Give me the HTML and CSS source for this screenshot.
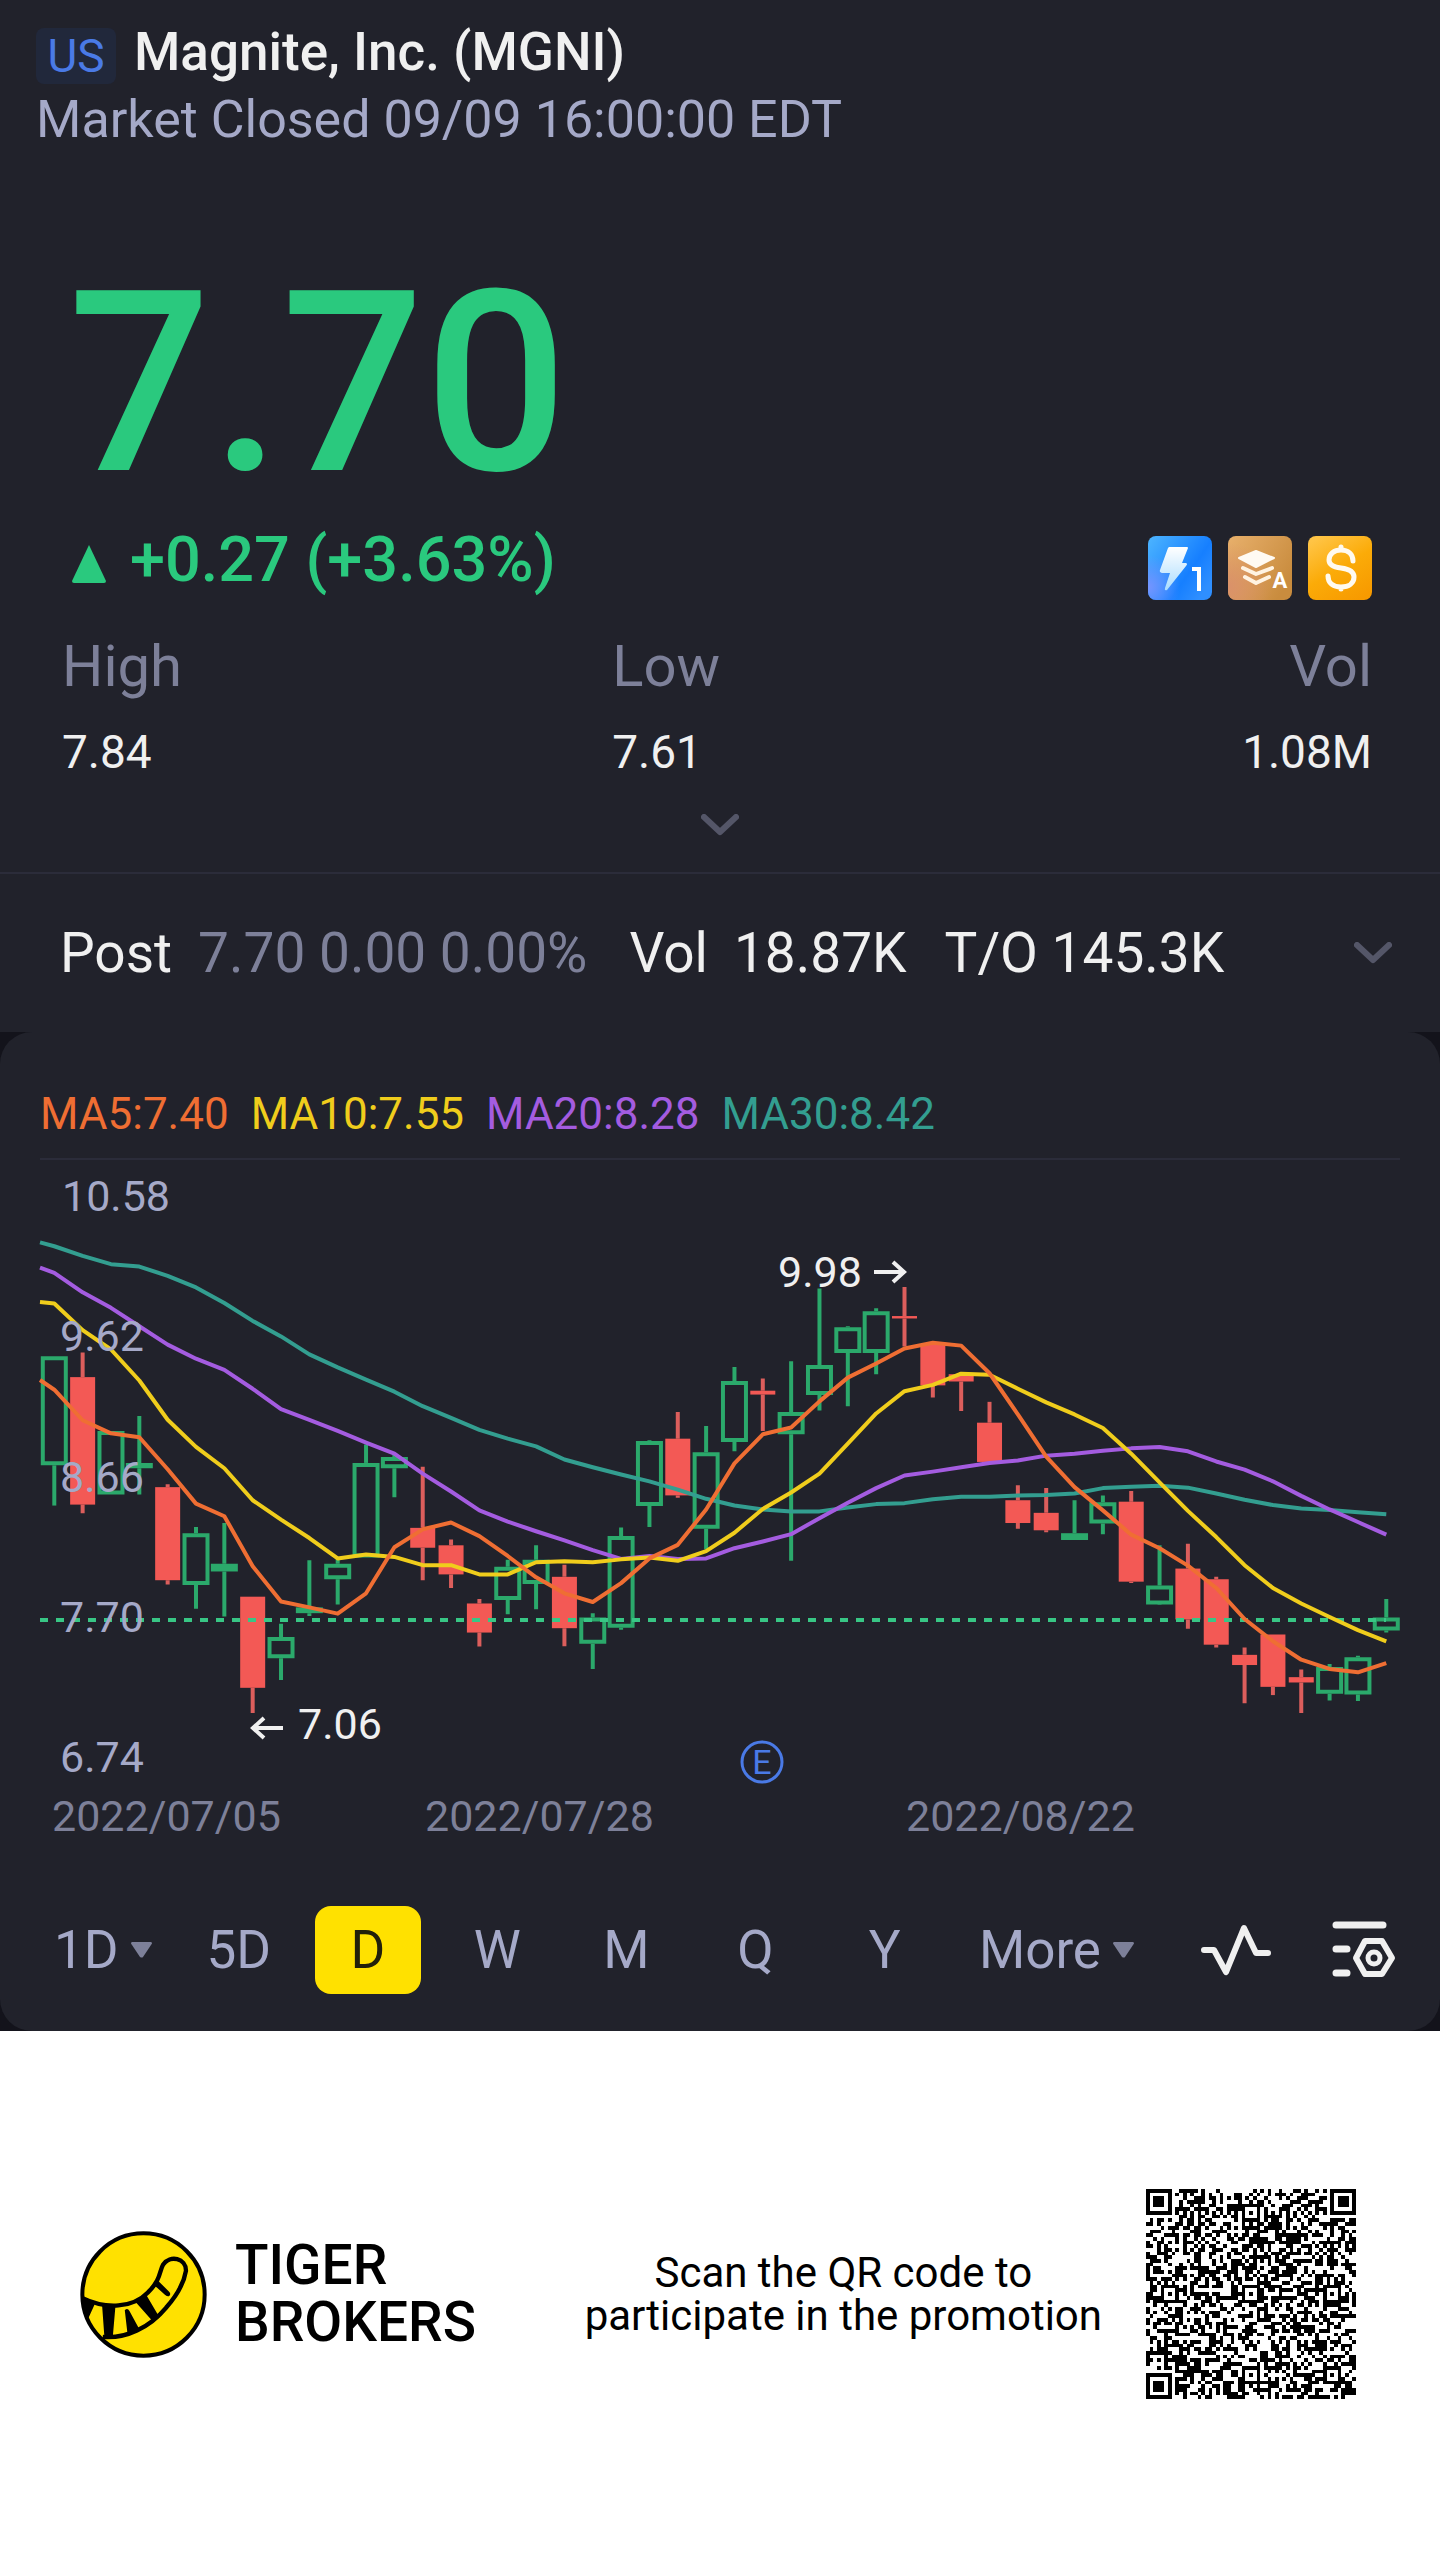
FILE: index.html
```html
<!DOCTYPE html>
<html lang="en">
<head>
<meta charset="utf-8">
<meta name="viewport" content="width=device-width, initial-scale=1">
<title>Magnite, Inc. (MGNI)</title>
<link rel="stylesheet" href="styles.css">
</head>
<body>
<main class="app">
  <section class="quote">
    <header class="head">
      <div class="head-row">
        <span class="market">US</span>
        <h1 class="name">Magnite, Inc. (MGNI)</h1>
      </div>
      <p class="status">Market Closed 09/09 16:00:00 EDT</p>
    </header>
    <p class="price">7.70</p>
    <div class="change-row">
      <p class="change">
        <svg class="up" viewBox="0 0 34 38" aria-hidden="true"><path d="M17 0 34 36q0 2-2 2H2q-2 0-2-2z"/></svg>
        <span>+0.27 (+3.63%)</span>
      </p>
      <div class="badges">
        <svg class="badge" viewBox="0 0 64 64" role="img" aria-label="Level 1 quotes">
          <defs>
            <linearGradient id="blue" x1="0" y1="0" x2="1" y2="0.7"><stop offset="0" stop-color="#4db5ff"/><stop offset="0.7" stop-color="#167fff"/><stop offset="1" stop-color="#2f8fff"/></linearGradient>
            <radialGradient id="violet" cx="0" cy="0.8" r="0.5"><stop offset="0" stop-color="#7594ff"/><stop offset="1" stop-color="#7594ff" stop-opacity="0"/></radialGradient>
            <linearGradient id="bolt" x1="0" y1="0" x2="0" y2="1"><stop offset="0" stop-color="#fff"/><stop offset="1" stop-color="#a9dcff"/></linearGradient>
          </defs>
          <rect width="64" height="64" rx="8" fill="url(#blue)"/>
          <rect width="64" height="64" rx="8" fill="url(#violet)"/>
          <path d="M21 11h18q1 0 1 1l-6 15h4q2 1 0 3L19 54q-3 1-2-2l5-15h-8q-3-1-2-3l8-22z" fill="url(#bolt)"/>
          <path d="M44 33h7v22" fill="none" stroke="#fff" stroke-width="4"/>
        </svg>
        <svg class="badge" viewBox="0 0 64 64" role="img" aria-label="Depth A">
          <defs>
            <linearGradient id="bronze" x1="0" y1="0" x2="1" y2="0.6"><stop offset="0" stop-color="#e8b06c"/><stop offset="1" stop-color="#c98c3e"/></linearGradient>
            <radialGradient id="rose" cx="0" cy="0.8" r="0.7"><stop offset="0" stop-color="#da916a"/><stop offset="1" stop-color="#da916a" stop-opacity="0"/></radialGradient>
          </defs>
          <rect width="64" height="64" rx="8" fill="url(#bronze)"/>
          <rect width="64" height="64" rx="8" fill="url(#rose)"/>
          <path d="M11 22 28 15 46 22 28 31z" fill="#fffaf2" stroke="#fffaf2" stroke-width="2" stroke-linejoin="round"/>
          <path d="M15 32l13 6 16-6M17 41l11 6 13-6" fill="none" stroke="#fff3e2" stroke-width="4" stroke-linecap="round" stroke-linejoin="round"/>
          <text x="52" y="52" class="badge-letter">A</text>
        </svg>
        <svg class="badge" viewBox="0 0 64 64" role="img" aria-label="Dividend">
          <defs>
            <linearGradient id="gold" x1="0.2" y1="0" x2="0.8" y2="1"><stop offset="0" stop-color="#ffc445"/><stop offset="0.5" stop-color="#fbab08"/><stop offset="1" stop-color="#f79a00"/></linearGradient>
          </defs>
          <rect width="64" height="64" rx="8" fill="url(#gold)"/>
          <path d="M45 25c0-7-5-11-12-11s-12 4-12 10c0 5 4 7 12 8s13 3 13 9-5 10-13 10-13-4-13-11M33 11v3M33 51v2" fill="none" stroke="#fffaf0" stroke-width="5" stroke-linecap="round"/>
        </svg>
      </div>
    </div>
    <dl class="stats">
      <div><dt>High</dt><dd>7.84</dd></div>
      <div><dt>Low</dt><dd>7.61</dd></div>
      <div class="right"><dt>Vol</dt><dd>1.08M</dd></div>
    </dl>
    <button class="expand" type="button" aria-label="Show more figures">
      <svg class="chevron" viewBox="0 0 38 22" aria-hidden="true"><path d="M3 3l16 15L35 3"/></svg>
    </button>
  </section>

  <section class="post">
    <span>Post</span>
    <span class="muted">7.70 0.00 0.00%</span>
    <span class="post-vol">Vol</span>
    <span>18.87K</span>
    <span class="post-to">T/O 145.3K</span>
    <button class="post-more" type="button" aria-label="Show post-market details">
      <svg class="chevron" viewBox="0 0 38 22" aria-hidden="true"><path d="M3 3l16 15L35 3"/></svg>
    </button>
  </section>

  <div class="panel-back">
  <section class="panel">
    <ul class="averages">
      <li class="ma5">MA5:7.40</li>
      <li class="ma10">MA10:7.55</li>
      <li class="ma20">MA20:8.28</li>
      <li class="ma30">MA30:8.42</li>
    </ul>
    <svg class="chart" viewBox="0 0 1440 700" role="img" aria-label="Daily candlestick chart">
      <g id="candles"></g>
      <path class="last" d="M40 460H1386"/>
      <g id="lines"></g>
      <g class="axis">
        <text x="62" y="51">10.58</text>
        <text x="60" y="191">9.62</text>
        <text x="60" y="332">8.66</text>
        <text x="60" y="472">7.70</text>
        <text x="60" y="612">6.74</text>
      </g>
      <g class="dates">
        <text x="52" y="671">2022/07/05</text>
        <text x="425" y="671">2022/07/28</text>
        <text x="906" y="671">2022/08/22</text>
      </g>
      <g class="marks">
        <text x="298" y="579">7.06</text>
        <path d="M283 568H253M264 558l-11 10 11 10"/>
        <text x="778" y="127">9.98</text>
        <path d="M874 112h30M893 102l11 10-11 10"/>
      </g>
      <g class="event">
        <circle cx="762" cy="602" r="20"/>
        <text x="762" y="614">E</text>
      </g>
    </svg>
    <nav class="periods" aria-label="Chart period">
      <button type="button" class="first">1D<svg class="tri" viewBox="0 0 21 16" aria-hidden="true"><path d="M1 0h19q2 1 0 3l-8 12q-1 1-3 0L1 3q-2-2 0-3z"/></svg></button>
      <button type="button">5D</button>
      <button type="button" class="active" aria-pressed="true">D</button>
      <button type="button">W</button>
      <button type="button">M</button>
      <button type="button">Q</button>
      <button type="button">Y</button>
      <button type="button">More<svg class="tri" viewBox="0 0 21 16" aria-hidden="true"><path d="M1 0h19q2 1 0 3l-8 12q-1 1-3 0L1 3q-2-2 0-3z"/></svg></button>
      <button type="button" aria-label="Indicators">
        <svg class="tool" viewBox="0 0 72 60" aria-hidden="true"><path d="M4 30h10l12 22L44 8l12 25h12" stroke-width="6"/></svg>
      </button>
      <button type="button" aria-label="Chart settings">
        <svg class="tool" viewBox="0 0 72 60" aria-hidden="true"><g stroke-width="7"><path d="M8 5h47M8 29h11M8 53h11"/><path d="M37 21h17l10 17-10 16H37L28 38z" stroke-width="6"/><circle cx="46" cy="38" r="6" stroke-width="5"/></g></svg>
      </button>
    </nav>
  </section>
  </div>

  <footer class="promo">
    <div class="brand">
      <svg class="logo" viewBox="92 93 380 380" aria-hidden="true">
        <defs><clipPath id="disc"><circle cx="282" cy="283" r="186"/></clipPath></defs>
        <circle cx="282" cy="283" r="183" fill="#ffe100"/>
        <g clip-path="url(#disc)">
          <path d="M98 293C170 328 250 324 296 276 335 238 329 213 341 193 361 164 410 174 409 212 403 248 381 287 350 322 300 382 230 416 160 410" fill="none" stroke="#000" stroke-width="13"/>
          <path d="M92 288 136 312 118 352 112 372 92 350zM158 314 198 318 190 412 165 410zM259 306 290 284 330 352 312 366zM226 330q8-8 14 2l28 52-34 16zM310 254 324 240 358 274q8 8 0 14-4 2-12-4l-24-22z"/>
        </g>
        <circle cx="282" cy="283" r="183" fill="none" stroke="#000" stroke-width="12"/>
      </svg>
      <p class="brand-name">TIGER<br>BROKERS</p>
    </div>
    <p class="scan">Scan the QR code to<br>participate in the promotion</p>
    <svg class="qr" viewBox="0 0 57 57" shape-rendering="crispEdges" role="img" aria-label="QR code"><path id="qr"/></svg>
  </footer>
</main>
<script src="chart.js"></script>
</body>
</html>
```
FILE: styles.css
```css
* { box-sizing: border-box; }
body {
  margin: 0;
  background: #fff;
  color: #f0f0f0;
  font-family: Roboto, "Noto Sans", sans-serif;
  font-weight: 400;
}
h1, p, dl, dt, dd, ul { margin: 0; padding: 0; font-weight: inherit; }
ul { list-style: none; }
button {
  border: 0;
  padding: 0;
  background: none;
  color: inherit;
  font: inherit;
}
svg { display: block; }

.quote {
  background: #21222b;
  border-bottom: 2px solid #2b2c3a;
}
.head { padding: 20px 36px 0; }
.head-row { display: flex; align-items: center; gap: 18px; }
.market {
  width: 80px;
  margin-top: 8px;
  border-radius: 8px;
  background: #21283b;
  color: #4a7ae6;
  font-size: 46px;
  line-height: 56px;
  text-align: center;
}
.name { font-size: 53px; font-weight: 500; line-height: 60px; }
.status { color: #a5a9c8; font-size: 52px; line-height: 64px; margin-top: 4px; }
.price {
  padding: 0 68px;
  margin-top: 104px;
  color: #2ac97e;
  font-size: 252px;
  font-weight: 500;
  line-height: 256px;
}
.change-row {
  display: flex;
  justify-content: space-between;
  align-items: center;
  padding: 0 68px 0 72px;
  margin-top: 8px;
}
.change {
  display: flex;
  align-items: center;
  gap: 24px;
  color: #2ac97e;
  font-size: 63px;
  font-weight: 500;
  line-height: 74px;
}
.up { width: 34px; height: 38px; margin-top: 8px; fill: #2ac97e; }
.badges { display: flex; gap: 16px; margin-top: 16px; }
.badge { width: 64px; height: 64px; }
.badge-letter { font-size: 22px; font-weight: 700; fill: #fff; text-anchor: middle; }
.stats {
  display: grid;
  grid-template-columns: 42fr 29fr 29fr;
  padding: 0 68px 0 62px;
  margin-top: 22px;
}
.stats dt { color: #7d8099; font-size: 58px; line-height: 88px; }
.stats dd { font-size: 46px; line-height: 84px; }
.right { text-align: right; }
.expand { display: block; width: 100%; padding: 20px 0 36px; }
.chevron {
  width: 38px;
  height: 22px;
  margin: 0 auto;
  fill: none;
  stroke: #545668;
  stroke-width: 6;
  stroke-linecap: round;
  stroke-linejoin: round;
}

.post {
  display: flex;
  align-items: center;
  gap: 26px;
  height: 158px;
  padding: 0 48px 0 60px;
  background: #21222b;
  font-size: 55px;
  white-space: nowrap;
}
.muted { color: #7d8099; }
.post-vol { margin-left: 16px; }
.post-to { margin-left: 12px; }
.post-more { margin-left: auto; }

.panel-back { background: #13131b; }
.panel { border-radius: 32px; background: #21222b; }
.averages {
  display: flex;
  gap: 22px;
  margin: 0 40px;
  padding-top: 48px;
  border-bottom: 2px solid #2b2c3a;
  font-size: 44px;
  line-height: 68px;
  height: 128px;
}
.ma5 { color: #ef6e33; }
.ma10 { color: #f0cd1c; }
.ma20 { color: #a45ce0; }
.ma30 { color: #339e90; }

.chart { width: 100%; height: auto; font-size: 43px; }
.candle-up path { fill: none; stroke: #2ba96b; stroke-width: 4; }
.candle-down { fill: #f35955; }
.candle-down path { stroke: #dc5e5c; stroke-width: 4; }
.line { fill: none; stroke-width: 4; stroke-linejoin: round; }
.line.ma5 { stroke: #ef6e33; }
.line.ma10 { stroke: #f0cd1c; }
.line.ma20 { stroke: #a45ce0; }
.line.ma30 { stroke: #339e90; }
.last { stroke: #38c685; stroke-width: 4; stroke-dasharray: 8 8; }
.axis { fill: #a5a9c8; }
.dates { fill: #7d8099; }
.marks { fill: #f0f0f0; }
.marks path { fill: none; stroke: #f0f0f0; stroke-width: 4; }
.event { fill: #4a7ae6; font-size: 34px; text-anchor: middle; }
.event circle { fill: none; stroke: #4a7ae6; stroke-width: 3; }

.periods {
  display: grid;
  grid-template-columns: 120fr repeat(6, 129fr) 214fr 144fr 112fr;
  align-items: center;
  padding: 46px 20px 37px 54px;
  color: #a5a9c8;
  font-size: 53px;
}
.periods button {
  display: flex;
  align-items: center;
  justify-content: center;
  gap: 12px;
  height: 88px;
}
.periods .first { justify-content: flex-start; }
.periods .active {
  margin: 0 12px;
  border-radius: 16px;
  background: #ffe100;
  color: #22200a;
}
.tri { width: 21px; height: 16px; fill: #7d8099; }
.tool { width: 72px; height: 60px; fill: none; stroke: #f0f0f0; stroke-linecap: round; stroke-linejoin: round; }

.promo {
  display: flex;
  align-items: center;
  padding: 158px 84px 158px 80px;
  color: #000;
}
.brand { display: flex; align-items: center; gap: 28px; }
.logo { width: 127px; height: 127px; }
.brand-name { font-size: 55px; font-weight: 500; line-height: 57px; }
.scan { margin: 0 44px 0 auto; font-size: 42px; line-height: 43px; text-align: center; }
.qr { width: 210px; height: 210px; }
```
FILE: chart.js
```js
const NS = "http://www.w3.org/2000/svg";
const STEP = 28.34, FIRST = 54.3, TICK = 0.4847, OFFSET = -80;
const px = i => FIRST + STEP * i;
const py = v => v * TICK + OFFSET;

// One row per trading day: direction, body top, body bottom, high, low.
const days = `u570,795,570,878 d613,876,562,894 u724,855,724,855 u790,801,693,855 d840,1032,834,1041
u935,1042,922,1091 u998,1014,914,1107 d1066,1254,1066,1306 u1149,1193,1122,1238 u1088,1100,991,1106
u998,1030,985,1082 u790,985,752,985 u778,801,770,861 d924,965,798,1032 d960,1020,948,1048
d1080,1140,1071,1169 u1004,1073,990,1102 u990,1040,960,1092 d1025,1131,1000,1168 u1109,1163,1100,1215
u941,1130,923,1134 u745,879,743,922 d740,857,685,862 u768,926,714,968 u621,747,592,766
d641,649,616,724 u685,731,580,992 u588,650,430,682 u510,563,508,673 u477,563,471,607
d487,492,427,550 d545,630,540,655 d607,622,603,683 d707,788,664,788 d867,914,836,926
d893,929,842,933 u935,949,867,949 u871,915,857,937 d870,1035,848,1038 u1043,1082,960,1083
d1008,1113,957,1132 d1030,1165,1025,1171 d1186,1207,1171,1286 d1144,1252,1144,1269 d1232,1243,1216,1306
u1211,1266,1205,1280 u1191,1268,1188,1281 u1109,1136,1071,1140`.split(/\s+/);

// The first value of each average is where it enters the plot on the left.
const averages = {
  ma30: [335,343,363,380,385,404,428,460,497,529,566,593,618,643,673,697,722,740,756,783,799,814,828,845,864,878,886,890,890,882,875,873,865,860,860,857,856,853,842,839,837,841,853,866,877,884,887,892,896],
  ma20: [387,398,438,470,508,546,575,598,637,679,701,724,748,771,812,849,888,911,931,950,970,988,982,988,987,966,952,937,904,872,842,816,808,799,790,785,775,771,765,760,757,766,787,804,828,858,886,912,938],
  ma10: [458,461,516,556,620,701,757,801,867,907,945,987,979,984,1001,1001,1020,1020,995,993,995,989,985,992,972,934,885,851,812,750,688,642,629,606,608,637,665,690,718,771,830,889,943,1001,1048,1080,1108,1135,1158],
  ma5: [619,639,702,729,737,803,874,900,1003,1076,1088,1101,1059,964,927,913,941,982,1026,1059,1077,1038,987,959,886,791,731,717,663,614,585,554,542,548,605,690,777,840,888,938,966,1002,1048,1112,1158,1196,1215,1222,1203]
};

function add(parent, name, attrs) {
  const el = document.createElementNS(NS, name);
  for (const key in attrs) el.setAttribute(key, attrs[key]);
  parent.appendChild(el);
  return el;
}

const candles = document.getElementById("candles");
days.forEach((row, i) => {
  const up = row[0] === "u";
  const [top, bottom, high, low] = row.slice(1).split(",").map(v => py(+v));
  const x = px(i);
  const g = add(candles, "g", { class: up ? "candle-up" : "candle-down" });
  add(g, "path", { d: `M${x} ${high}V${top}M${x} ${bottom}V${low}` });
  if (up) {
    const h = Math.max(bottom - top - 4, 1);
    add(g, "path", { d: `M${x - 11.5} ${top + 2}h23v${h}h-23z` });
  } else {
    add(g, "rect", { x: x - 12.5, y: top, width: 25, height: bottom - top });
  }
});

const lines = document.getElementById("lines");
for (const name in averages) {
  const points = averages[name].map((v, i) => `${i ? px(i - 1) : 40},${py(v)}`);
  add(lines, "polyline", { class: "line " + name, points: points.join(" ") });
}

// QR symbol: finders, alignment marks and timing rows over the data modules.
const SIZE = 57;
const marks = [6, 28, 50];
let seed = 20220909;
function bit() {
  seed ^= seed << 13; seed ^= seed >>> 17; seed ^= seed << 5;
  return seed & 1;
}
function moduleAt(x, y, data) {
  for (const [cx, cy] of [[3, 3], [SIZE - 4, 3], [3, SIZE - 4]]) {
    const d = Math.max(Math.abs(x - cx), Math.abs(y - cy));
    if (d <= 4) return d !== 2 && d !== 4;
  }
  for (const cx of marks) for (const cy of marks) {
    if ((cx === 6 && cy !== 28) || (cy === 6 && cx !== 28)) continue;
    const d = Math.max(Math.abs(x - cx), Math.abs(y - cy));
    if (d <= 2) return d !== 1;
  }
  if (x === 6) return y % 2 === 0;
  if (y === 6) return x % 2 === 0;
  return data;
}
let d = "";
for (let y = 0; y < SIZE; y++)
  for (let x = 0; x < SIZE; x++)
    if (moduleAt(x, y, bit())) d += `M${x} ${y}h1v1h-1z`;
document.getElementById("qr").setAttribute("d", d);
```
